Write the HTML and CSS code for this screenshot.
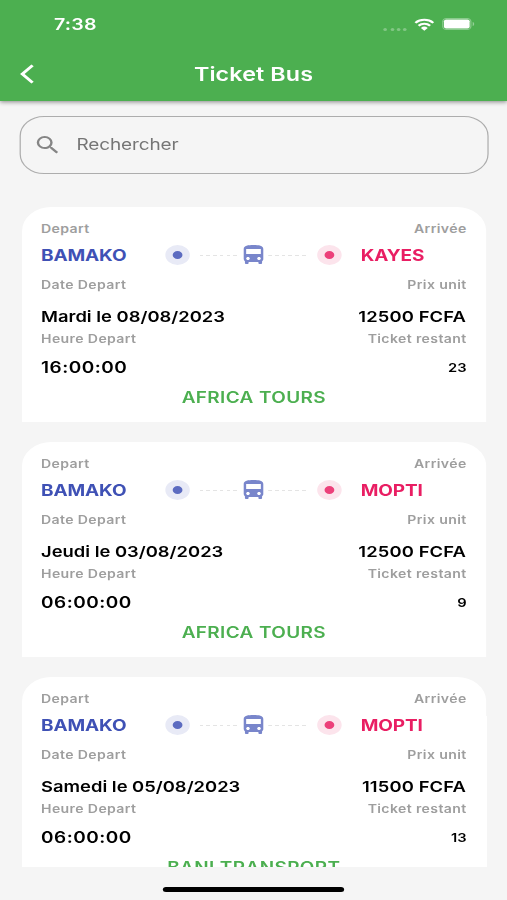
FILE: index.html
```html
<!doctype html>
<html lang="fr">
<head>
<meta charset="UTF-8">
<title>Ticket Bus</title>
<meta name="viewport" content="width=device-width, initial-scale=1.0">
<link rel="stylesheet" href="styles.css">
</head>

<body>
<svg width="0" height="0" class="sprite">
  <symbol id="bus" viewBox="0 0 24 24">
    <path d="M4 16c0 .88.39 1.67 1 2.22V20c0 .55.45 1 1 1h1c.55 0 1-.45 1-1v-1h8v1c0 .55.45 1 1 1h1c.55 0 1-.45 1-1v-1.78c.61-.55 1-1.34 1-2.22V6c0-3.5-3.58-4-8-4s-8 .5-8 4v10zm3.500 1c-.83 0-1.500-.67-1.500-1.500S6.670 14 7.500 14s1.500.67 1.500 1.500S8.330 17 7.500 17zm9 0c-.83 0-1.500-.67-1.500-1.500s.67-1.500 1.500-1.500 1.500.67 1.500 1.500-.67 1.500-1.500 1.500zm1.500-6H6V6h12v5z"/>
  </symbol>
</svg>

<div class="app">
  <header class="header">
    <div class="status">
      <span class="time">7:38</span>
      <span class="dots"><i></i><i></i><i></i><i></i></span>
      <svg class="wifi" width="17" height="13" viewBox="0 0 17 13">
        <path d="M1.200 4.900a10.300 10.300 0 0 1 14.600 0M3.800 7.700a6.600 6.600 0 0 1 9.400 0" fill="none" stroke="#fff" stroke-width="2"/>
        <path d="M5.700 9.900a4 4 0 0 1 5.600 0L8.500 12.700z" fill="#fff"/>
      </svg>
      <svg class="battery" width="27" height="12" viewBox="0 0 27 12">
        <rect x=".5" y=".5" width="23" height="11" rx="3" fill="none" stroke="#fff" stroke-opacity=".35"/>
        <rect x="1.500" y="1.500" width="21" height="9" rx="1.800" fill="#fff"/>
        <path d="M25 4v4c1.600-.6 1.600-3.400 0-4z" fill="#fff" fill-opacity=".4"/>
      </svg>
    </div>
    <div class="navbar">
      <svg class="back" width="14" height="20" viewBox="0 0 14 20">
        <path d="M11.600 1.400L3.200 10l8.400 8.600" fill="none" stroke="#fff" stroke-width="2.600"/>
      </svg>
      <h1>Ticket Bus</h1>
    </div>
  </header>

  <div class="search">
    <svg width="24" height="24" viewBox="0 0 24 24">
      <path fill="#858585" d="M15.500 14h-.79l-.28-.27A6.471 6.471 0 0 0 16 9.500 6.500 6.500 0 1 0 9.500 16c1.610 0 3.090-.59 4.230-1.570l.27.28v.79l5 4.990L20.490 19l-4.990-5zm-6 0C7.010 14 5 11.990 5 9.500S7.010 5 9.500 5 14 7.010 14 9.500 11.990 14 9.500 14z"/>
    </svg>
    <span>Rechercher</span>
  </div>

  <main class="list">
    <section class="card">
      <div class="row label"><span>Depart</span><span>Arrivée</span></div>
      <div class="route">
        <span class="city from">BAMAKO</span>
        <span class="stop blue"></span>
        <span class="dash"></span>
        <svg class="bus" width="24" height="24"><use href="#bus"/></svg>
        <span class="dash after"></span>
        <span class="stop pink"></span>
        <span class="city to">KAYES</span>
      </div>
      <div class="row label date"><span>Date Depart</span><span>Prix unit</span></div>
      <div class="row value price"><span>Mardi le 08/08/2023</span><span class="amount">12500 FCFA</span></div>
      <div class="row label hour"><span>Heure Depart</span><span>Ticket restant</span></div>
      <div class="row value left"><span class="clock">16:00:00</span><span class="count">23</span></div>
      <div class="company">AFRICA TOURS</div>
    </section>

    <section class="card">
      <div class="row label"><span>Depart</span><span>Arrivée</span></div>
      <div class="route">
        <span class="city from">BAMAKO</span>
        <span class="stop blue"></span>
        <span class="dash"></span>
        <svg class="bus" width="24" height="24"><use href="#bus"/></svg>
        <span class="dash after"></span>
        <span class="stop pink"></span>
        <span class="city to">MOPTI</span>
      </div>
      <div class="row label date"><span>Date Depart</span><span>Prix unit</span></div>
      <div class="row value price"><span>Jeudi le 03/08/2023</span><span class="amount">12500 FCFA</span></div>
      <div class="row label hour"><span>Heure Depart</span><span>Ticket restant</span></div>
      <div class="row value left"><span class="clock">06:00:00</span><span class="count">9</span></div>
      <div class="company">AFRICA TOURS</div>
    </section>

    <section class="card">
      <div class="row label"><span>Depart</span><span>Arrivée</span></div>
      <div class="route">
        <span class="city from">BAMAKO</span>
        <span class="stop blue"></span>
        <span class="dash"></span>
        <svg class="bus" width="24" height="24"><use href="#bus"/></svg>
        <span class="dash after"></span>
        <span class="stop pink"></span>
        <span class="city to">MOPTI</span>
      </div>
      <div class="row label date"><span>Date Depart</span><span>Prix unit</span></div>
      <div class="row value price"><span>Samedi le 05/08/2023</span><span class="amount">11500 FCFA</span></div>
      <div class="row label hour"><span>Heure Depart</span><span>Ticket restant</span></div>
      <div class="row value left"><span class="clock">06:00:00</span><span class="count">13</span></div>
      <div class="company">BANI TRANSPORT</div>
    </section>
  </main>

  <div class="home"></div>
</div>
</body>
</html>
```
FILE: styles.css
```css
* {
  box-sizing: border-box;
}

html, body {
  height: 100%;
  margin: 0;
  overflow: hidden;
}

body {
  background: #f5f5f5;
  font-family: Inter, "Liberation Sans", sans-serif;
}

.sprite {
  display: none;
}

.app {
  width: 414px;
  height: 900px;
  display: flex;
  flex-direction: column;
  transform: scaleX(1.22464);
  transform-origin: 0 0;
}

/* Header */
.header {
  flex: none;
  height: 101px;
  background: #4caf50;
  color: #fff;
  box-shadow: 0 1px 4px rgba(0, 0, 0, .45);
}

.status {
  display: flex;
  align-items: center;
  height: 48px;
  padding: 0 26px 0 44px;
}

.time {
  flex: 1;
  font-size: 16px;
  font-weight: 600;
  letter-spacing: .2px;
}

.dots {
  display: flex;
  gap: 2.2px;
  margin: 10px 6px 0 0;
}

.dots i {
  width: 3px;
  height: 3px;
  border-radius: 50%;
  background: rgba(255, 255, 255, .3);
}

.wifi {
  margin-right: 6px;
}

.navbar {
  display: flex;
  align-items: center;
  height: 52px;
  padding: 0 15px;
}

.navbar h1 {
  flex: 1;
  margin: 0 14px 0 0;
  text-align: center;
  font-size: 19px;
  font-weight: 600;
  letter-spacing: .1px;
}

/* Search */
.search {
  flex: none;
  display: flex;
  align-items: center;
  height: 58px;
  margin: 15px 15.500px 0 16px;
  padding: 0 10px;
  border: 1px solid #adadad;
  border-radius: 20px;
  color: #757575;
  font-size: 15.500px;
}

.search span {
  margin: 0 0 2px 11.500px;
  letter-spacing: -.1px;
}

/* Tickets */
.list {
  flex: none;
  height: 692px;
  margin-top: 1px;
  padding: 32px 17px 0 18px;
  overflow: hidden;
}

.card {
  height: 215px;
  margin-bottom: 20px;
  padding: 14px 16px 0 15.500px;
  background: #fff;
  border-radius: 24px 24px 0 0;
}

.row {
  display: flex;
  justify-content: space-between;
  align-items: center;
}

.label {
  height: 16px;
  color: #9e9e9e;
  font-size: 11.500px;
  font-weight: 600;
  letter-spacing: .3px;
}

.route {
  display: flex;
  align-items: center;
  height: 24px;
  margin-top: 6px;
}

.city {
  font-size: 15.500px;
  font-weight: 700;
  letter-spacing: -.1px;
}

.from {
  width: 101.500px;
  color: #3f51b5;
}

.to {
  width: 102px;
  padding-left: 15.500px;
  color: #e91e63;
}

.stop {
  flex: none;
  width: 20px;
  height: 20px;
  border: 6px solid #e8eaf6;
  border-radius: 50%;
  background: #5c6bc0;
}

.pink {
  border-color: #fce4ec;
  background: #ec407a;
}

.dash {
  flex: 1;
  height: 1px;
  margin: 0 0 0 8px;
  background: repeating-linear-gradient(90deg, #e4e4e4 0 3px, transparent 3px 5.500px);
}

.after {
  margin: 0 8px 0 0;
}

.bus {
  flex: none;
  fill: #7986cb;
}

.value {
  height: 20px;
  font-size: 15px;
  font-weight: 600;
  color: #000;
}

.date {
  margin-top: 10px;
}

.price {
  margin-top: 13px;
}

.amount {
  margin-right: .500px;
  letter-spacing: .1px;
}

.hour {
  margin-top: 5px;
}

.left {
  margin-top: 10px;
}

.clock {
  font-size: 15.500px;
  letter-spacing: .4px;
}

.count {
  font-size: 12px;
}

.company {
  height: 20px;
  margin-top: 11px;
  line-height: 20px;
  text-align: center;
  color: #4caf50;
  font-size: 15.500px;
  font-weight: 600;
  letter-spacing: .3px;
}

.home {
  width: 148px;
  height: 5px;
  margin: 20px auto 0;
  border-radius: 3px;
  background: #000;
}
```
